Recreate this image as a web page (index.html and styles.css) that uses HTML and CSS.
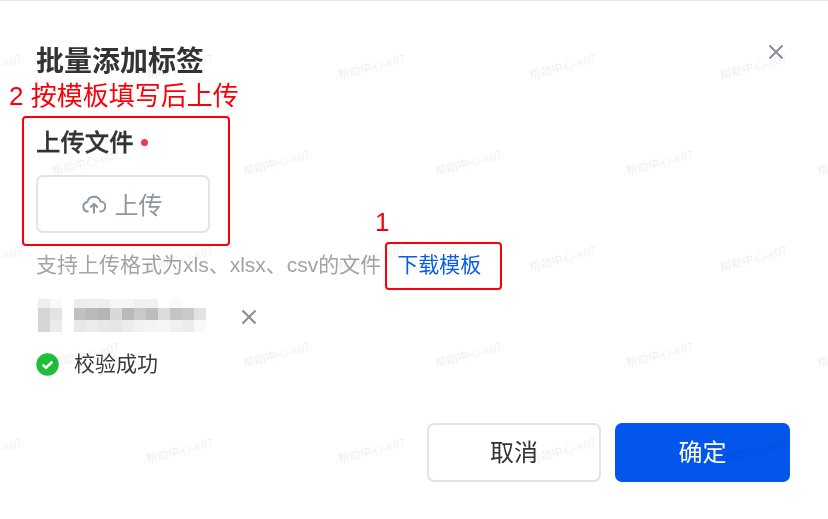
FILE: index.html
```html
<!DOCTYPE html>
<html lang="zh-CN">
<head>
<meta charset="utf-8">
<title>批量添加标签</title>
<link rel="stylesheet" href="styles.css">
</head>
<body>
<main class="modal">
  <header class="head">
    <h1 class="title">批量添加标签</h1>
    <button class="close" aria-label="关闭">
      <svg width="16" height="16" viewBox="0 0 16 16"><path d="M1.5 1.5 14.5 14.5M14.5 1.5 1.5 14.5" stroke="#8b909a" stroke-width="2.1" fill="none"/></svg>
    </button>
  </header>

  <div class="label-row"><span class="label">上传文件</span><i class="req"></i></div>

  <button class="upload">
    <svg class="cloud" width="24" height="20" viewBox="0 0 24 20"><path d="M6.6 17.6H6a4.9 4.9 0 0 1-.7-9.7A6.9 6.9 0 0 1 18.6 7.6 5 5 0 0 1 18 17.6h-.6" fill="none" stroke="#8f96a3" stroke-width="2"/><path d="M12 19.6V10M8.2 13.4 12 9.8l3.8 3.6" fill="none" stroke="#8f96a3" stroke-width="2"/></svg>
    <span>上传</span>
  </button>

  <p class="hint"><span>支持上传格式为xls、xlsx、csv的文件</span><a class="link">下载模板</a></p>

  <div class="file-row">
    <svg class="mosaic" width="168" height="33" viewBox="0 0 168 33" aria-hidden="true">
      <g shape-rendering="crispEdges">
        <rect x="0" y="0" width="12" height="9" fill="#eeeeee"/><rect x="12" y="0" width="12" height="9" fill="#f9f9f9"/>
        <rect x="0" y="9" width="12" height="12" fill="#d5d5d5"/><rect x="12" y="9" width="12" height="12" fill="#e3e3e3"/>
        <rect x="0" y="21" width="12" height="12" fill="#d5d5d5"/><rect x="12" y="21" width="12" height="12" fill="#ebebeb"/>

        <rect x="36" y="0" width="12" height="9" fill="#ececec"/><rect x="48" y="0" width="12" height="9" fill="#eeeeee"/><rect x="60" y="0" width="12" height="9" fill="#eeeeee"/><rect x="72" y="0" width="12" height="9" fill="#f6f6f6"/><rect x="84" y="0" width="12" height="9" fill="#f6f6f6"/><rect x="96" y="0" width="12" height="9" fill="#f0f0f0"/><rect x="108" y="0" width="12" height="9" fill="#f0f0f0"/><rect x="132" y="0" width="12" height="9" fill="#fafafa"/>

        <rect x="36" y="9" width="12" height="12" fill="#c0c0c0"/><rect x="48" y="9" width="12" height="12" fill="#b9b9b9"/><rect x="60" y="9" width="12" height="12" fill="#b4b4b4"/><rect x="72" y="9" width="12" height="12" fill="#d8d8d8"/><rect x="84" y="9" width="12" height="12" fill="#b9b9b9"/><rect x="96" y="9" width="12" height="12" fill="#c9c9c9"/><rect x="108" y="9" width="12" height="12" fill="#bdbdbd"/><rect x="120" y="9" width="12" height="12" fill="#dcdcdc"/><rect x="132" y="9" width="12" height="12" fill="#c4c4c4"/><rect x="144" y="9" width="12" height="12" fill="#c9c9c9"/><rect x="156" y="9" width="12" height="12" fill="#e2e2e2"/>

        <rect x="36" y="21" width="12" height="12" fill="#e8e8e8"/><rect x="48" y="21" width="12" height="12" fill="#ececec"/><rect x="60" y="21" width="12" height="12" fill="#e8e8e8"/><rect x="72" y="21" width="12" height="12" fill="#e6e6e6"/><rect x="84" y="21" width="12" height="12" fill="#ececec"/><rect x="96" y="21" width="12" height="12" fill="#f2f2f2"/><rect x="108" y="21" width="12" height="12" fill="#f4f4f4"/><rect x="120" y="21" width="12" height="12" fill="#f6f6f6"/><rect x="132" y="21" width="12" height="12" fill="#f0f0f0"/><rect x="144" y="21" width="12" height="12" fill="#ececec"/><rect x="156" y="21" width="12" height="12" fill="#f9f9f9"/>
      </g>
    </svg>
    <svg class="remove" width="16" height="16" viewBox="0 0 16 16"><path d="M1.5 1.5 14.5 14.5M14.5 1.5 1.5 14.5" stroke="#8c8c8c" stroke-width="2.1" fill="none"/></svg>
  </div>

  <div class="status">
    <svg width="23" height="23" viewBox="0 0 23 23"><circle cx="11.5" cy="11.5" r="11.2" fill="#20bf3a"/><path d="M6.6 11.6 10 14.8 16.4 8.6" fill="none" stroke="#fff" stroke-width="2.6"/></svg>
    <span>校验成功</span>
  </div>

  <footer class="foot">
    <button class="btn btn-cancel">取消</button>
    <button class="btn btn-ok">确定</button>
  </footer>
</main>

<div class="annot annot-box-upload"></div>
<div class="annot annot-box-link"></div>
<div class="annot annot-text annot-two">2 按模板填写后上传</div>
<div class="annot annot-text annot-one">1</div>

<div class="marks" aria-hidden="true">
  <div class="mark-row row-a"><span>帮助中心-e07</span><span>帮助中心-e07</span><span>帮助中心-e07</span><span>帮助中心-e07</span><span>帮助中心-e07</span></div>
  <div class="mark-row row-b"><span>帮助中心-e07</span><span>帮助中心-e07</span><span>帮助中心-e07</span><span>帮助中心-e07</span><span>帮助中心-e07</span></div>
  <div class="mark-row row-a"><span>帮助中心-e07</span><span>帮助中心-e07</span><span>帮助中心-e07</span><span>帮助中心-e07</span><span>帮助中心-e07</span></div>
  <div class="mark-row row-b"><span>帮助中心-e07</span><span>帮助中心-e07</span><span>帮助中心-e07</span><span>帮助中心-e07</span><span>帮助中心-e07</span></div>
  <div class="mark-row row-a"><span>帮助中心-e07</span><span>帮助中心-e07</span><span>帮助中心-e07</span><span>帮助中心-e07</span><span>帮助中心-e07</span></div>
</div>
```

FILE: styles.css
```css
* { box-sizing: border-box; }
html, body { margin: 0; padding: 0; }
body {
  width: 828px;
  height: 519px;
  overflow: hidden;
  position: relative;
  background: #fff;
  font-family: "Liberation Sans", "Noto Sans CJK SC", sans-serif;
  color: #333;
  filter: blur(0.35px);
}
.modal {
  height: 519px;
  border-top: 1px solid #e4e4e4;
  padding: 0 38px 37px 36px;
  display: flex;
  flex-direction: column;
}
.head {
  display: flex;
  justify-content: space-between;
  align-items: flex-start;
  padding-top: 42px;
}
.title {
  margin: 0;
  font-size: 28px;
  line-height: 38px;
  font-weight: 700;
  color: #333;
}
.close {
  padding: 0;
  border: 0;
  background: none;
  margin: 1px 6px 0 0;
  display: flex;
}
.label-row {
  margin-top: 42px;
  display: flex;
  align-items: center;
  gap: 7px;
  height: 36px;
}
.label {
  font-family: "Noto Sans CJK SC", sans-serif;
  font-size: 24.4px;
  font-weight: 500;
  line-height: 36px;
  color: #333;
  -webkit-text-stroke: 0.3px #333;
}
.req { width: 7px; height: 7px; border-radius: 50%; background: #f5384a; margin-top: 2px; }
.upload {
  margin-top: 16px;
  width: 174px;
  height: 58px;
  border: 2px solid #e3e3e3;
  border-radius: 7px;
  background: #fff;
  display: flex;
  align-items: center;
  justify-content: center;
  gap: 7px;
  padding: 0 0 2px;
  font-family: inherit;
  font-size: 24px;
  color: #8f96a3;
}
.cloud { margin: 2px 2px 0 -2px; }
.hint {
  margin: 14px 0 0;
  display: flex;
  font-size: 21px;
  line-height: 36px;
  color: #a3a3a3;
}
.link { margin-left: 16px; color: #0a5ceb; }
.file-row {
  margin: 16px 0 0 2px;
  display: flex;
  align-items: center;
}
.mosaic { display: block; }
.remove { margin-left: 35px; margin-top: 3px; }
.status {
  margin-top: 17px;
  display: flex;
  align-items: center;
  gap: 15px;
  font-size: 21px;
  line-height: 30px;
  color: #3a3a3a;
}
.foot {
  margin-top: auto;
  display: flex;
  justify-content: flex-end;
  gap: 14px;
}
.btn {
  height: 59px;
  border-radius: 7px;
  font-family: inherit;
  font-size: 24px;
  padding: 0 0 4px;
}
.btn-cancel { width: 174px; border: 2px solid #e3e3e3; background: #fff; color: #333; }
.btn-ok { width: 175px; border: 0; background: #0256eb; color: #fff; }

.annot { position: absolute; }
.annot-box-upload {
  left: 22px; top: 116px; width: 208px; height: 130px;
  border: 2px solid #fb0007; border-radius: 4px;
}
.annot-box-link {
  left: 385px; top: 242px; width: 117px; height: 48px;
  border: 2px solid #fb0007; border-radius: 4px;
}
.annot-text { color: #fb0007; font-size: 26px; line-height: 30px; white-space: nowrap; }
.annot-two { left: 9px; top: 81px; }
.annot-one { left: 375px; top: 207px; }

.marks {
  position: absolute;
  left: 0; top: 19px;
  width: 828px;
  display: flex;
  flex-direction: column;
  pointer-events: none;
}
.mark-row { display: flex; height: 96px; align-items: center; }
.mark-row span {
  flex: 0 0 191.3px;
  width: 191.3px;
  text-align: center;
  font-size: 11.5px;
  line-height: 14px;
  white-space: nowrap;
  color: rgba(0, 0, 0, 0.07);
  transform: rotate(-15deg);
}
.row-a { margin-left: -107px; }
.row-b { margin-left: -10px; }
```
